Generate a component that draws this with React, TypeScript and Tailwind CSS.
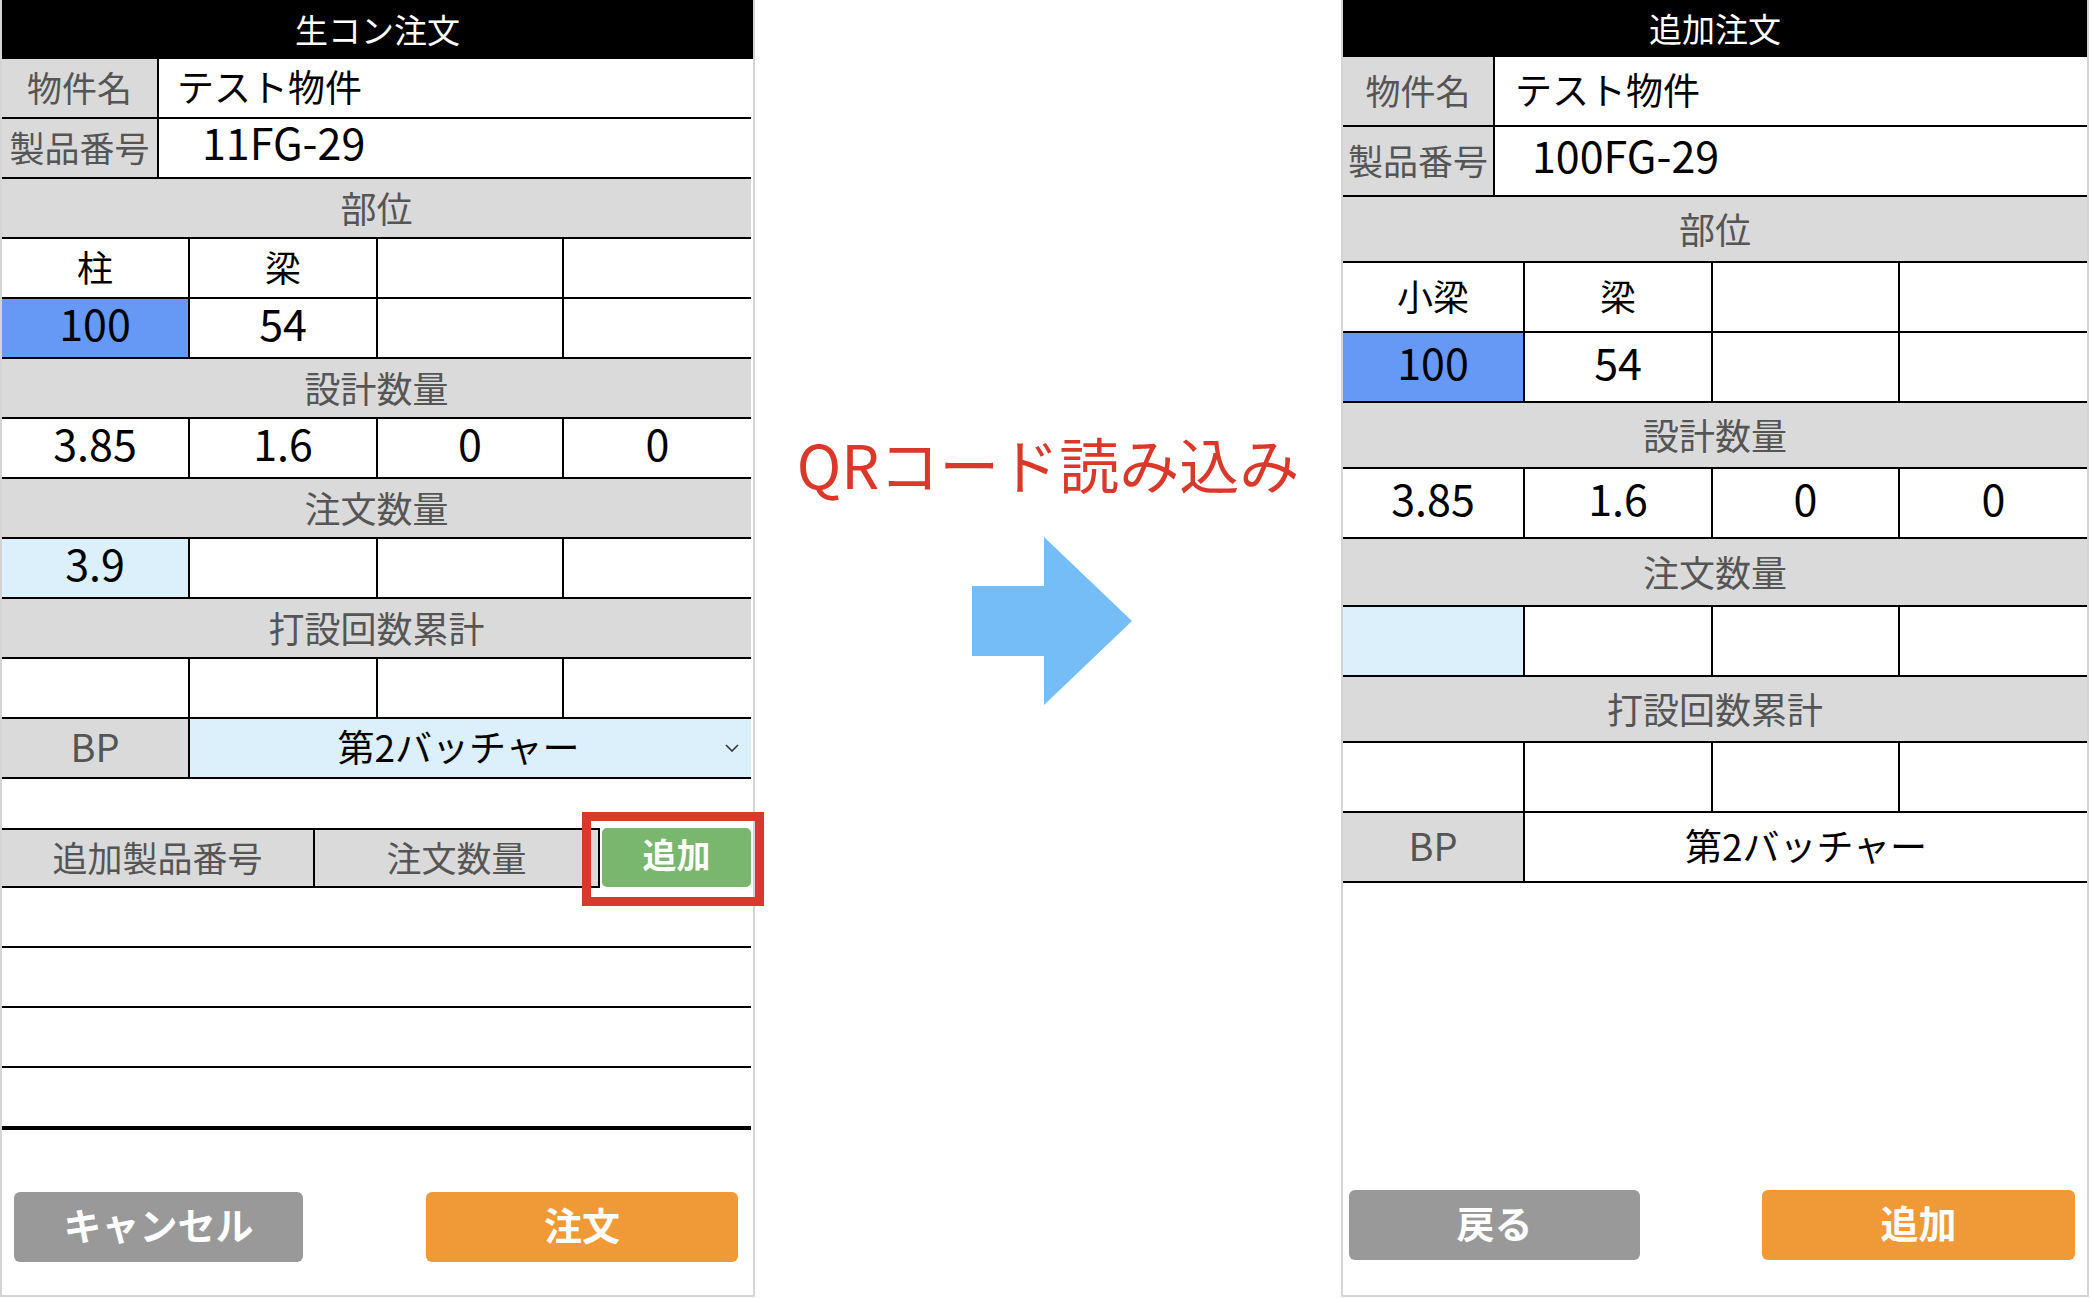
import React from 'react';

type Cell = { t?: string; bg?: string; cjk?: boolean };

function GridRow({ h, cols, cells }: { h: string; cols: string; cells: Cell[] }) {
  return (
    <div className={`grid ${cols} ${h} border-b-2 border-black`}>
      {cells.map((c, i) => (
        <div
          key={i}
          className={`flex items-center justify-center leading-none text-black ${c.cjk ? 'text-[36px] pb-[4px]' : 'text-[43px] pb-[12px]'} ${i > 0 ? 'border-l-2 border-black' : ''} ${c.bg ?? 'bg-white'}`}
        >
          {c.t ?? ''}
        </div>
      ))}
    </div>
  );
}

function SectionHeader({ h, text }: { h: string; text: string }) {
  return (
    <div className={`${h} flex items-center justify-center bg-[#dadada] text-[#555555] text-[36px] leading-none pb-[3px] border-b-2 border-black`}>
      {text}
    </div>
  );
}

function LabelRow({
  h,
  labelW,
  label,
  value,
  valueClass,
}: {
  h: string;
  labelW: string;
  label: string;
  value: string;
  valueClass: string;
}) {
  return (
    <div className={`flex ${h} border-b-2 border-black`}>
      <div className={`${labelW} shrink-0 flex items-center justify-center bg-[#dadada] text-[#555555] text-[35px] leading-none pb-[4px] border-r-2 border-black`}>
        {label}
      </div>
      <div className={`flex-1 flex items-center leading-none text-black ${valueClass}`}>{value}</div>
    </div>
  );
}

function Chevron() {
  return (
    <svg width="14" height="8" viewBox="0 0 14 8" className="shrink-0">
      <polyline points="1,1 7,7 13,1" fill="none" stroke="#333" strokeWidth="1.6" />
    </svg>
  );
}

function LeftPanel() {
  const cols = 'grid-cols-[186px_188px_186px_1fr]';
  const h = 'h-[60px]';
  return (
    <div className="w-[755px] h-[1297px] shrink-0 border-x-2 border-b-2 border-[#d4d4d4] flex flex-col bg-white">
      <div className="h-[59px] bg-black text-white text-[33px] leading-none flex items-center justify-center">生コン注文</div>
      <div className="mr-[2px] flex flex-col">
        <LabelRow h={h} labelW="w-[157px]" label="物件名" value="テスト物件" valueClass="pl-[18px] text-[37px] pb-[4px]" />
        <LabelRow h={h} labelW="w-[157px]" label="製品番号" value="11FG-29" valueClass="pl-[43px] text-[43px] pb-[13px]" />
        <SectionHeader h={h} text="部位" />
        <GridRow h={h} cols={cols} cells={[{ t: '柱', cjk: true }, { t: '梁', cjk: true }, {}, {}]} />
        <GridRow h={h} cols={cols} cells={[{ t: '100', bg: 'bg-[#6699f5]' }, { t: '54' }, {}, {}]} />
        <SectionHeader h={h} text="設計数量" />
        <GridRow h={h} cols={cols} cells={[{ t: '3.85' }, { t: '1.6' }, { t: '0' }, { t: '0' }]} />
        <SectionHeader h={h} text="注文数量" />
        <GridRow h={h} cols={cols} cells={[{ t: '3.9', bg: 'bg-[#dcf0fc]' }, {}, {}, {}]} />
        <SectionHeader h={h} text="打設回数累計" />
        <GridRow h={h} cols={cols} cells={[{}, {}, {}, {}]} />
        <div className={`grid ${cols} ${h} border-b-2 border-black`}>
          <div className="flex items-center justify-center bg-[#dadada] text-[#555555] text-[38px] leading-none pb-[4px]">BP</div>
          <div className="col-span-3 border-l-2 border-black bg-[#dcf0fc] flex items-center pl-[2px] pr-[12px]">
            <div className="flex-1 text-center text-black text-[37px] leading-none pb-[4px]">第2バッチャー</div>
            <Chevron />
          </div>
        </div>
        <div className="h-[49px]" />
        <div className="relative flex h-[60px]">
          <div className="w-[599px] flex border-y-2 border-r-2 border-black bg-[#dadada] text-[#555555] text-[35px] leading-none">
            <div className="w-[313px] border-r-2 border-black flex items-center justify-center pb-[4px]">追加製品番号</div>
            <div className="flex-1 flex items-center justify-center pb-[4px]">注文数量</div>
          </div>
          <div className="ml-[2px] w-[149px] h-[59px] rounded-[5px] bg-[#78b76d] text-white font-bold text-[34px] leading-none pb-[8px] flex items-center justify-center">
            追加
          </div>
          <div className="absolute left-[580px] top-[-16px] w-[182px] h-[94px] border-[9px] border-[#d9392a]" />
        </div>
        <div className="h-[60px] border-b-2 border-black" />
        <div className="h-[60px] border-b-2 border-black" />
        <div className="h-[60px] border-b-2 border-black" />
        <div className="h-[62px] border-b-4 border-black" />
      </div>
      <div className="mt-[62px] flex justify-between pl-[12px] pr-[15px]">
        <div className="w-[289px] h-[70px] rounded-[6px] bg-[#999999] text-white font-bold text-[38px] leading-none pb-[6px] flex items-center justify-center">
          キャンセル
        </div>
        <div className="w-[312px] h-[70px] rounded-[6px] bg-[#f09a37] text-white font-bold text-[38px] leading-none pb-[6px] flex items-center justify-center">
          注文
        </div>
      </div>
    </div>
  );
}

function RightPanel() {
  const cols = 'grid-cols-[180px_188px_187px_1fr]';
  const r = 'h-[70px]';
  const s = 'h-[66px]';
  return (
    <div className="w-[748px] mr-[1px] h-[1297px] shrink-0 border-x-2 border-b-2 border-[#d4d4d4] flex flex-col bg-white">
      <div className="h-[57px] bg-black text-white text-[33px] leading-none flex items-center justify-center">追加注文</div>
      <div className="flex flex-col">
        <LabelRow h={r} labelW="w-[152px]" label="物件名" value="テスト物件" valueClass="pl-[20px] text-[37px] pb-[4px]" />
        <LabelRow h={r} labelW="w-[152px]" label="製品番号" value="100FG-29" valueClass="pl-[37px] text-[43px] pb-[13px]" />
        <SectionHeader h={s} text="部位" />
        <GridRow h={r} cols={cols} cells={[{ t: '小梁', cjk: true }, { t: '梁', cjk: true }, {}, {}]} />
        <GridRow h={r} cols={cols} cells={[{ t: '100', bg: 'bg-[#6699f5]' }, { t: '54' }, {}, {}]} />
        <SectionHeader h={s} text="設計数量" />
        <GridRow h={r} cols={cols} cells={[{ t: '3.85' }, { t: '1.6' }, { t: '0' }, { t: '0' }]} />
        <SectionHeader h="h-[68px]" text="注文数量" />
        <GridRow h={r} cols={cols} cells={[{ bg: 'bg-[#dcf0fc]' }, {}, {}, {}]} />
        <SectionHeader h={s} text="打設回数累計" />
        <GridRow h={r} cols={cols} cells={[{}, {}, {}, {}]} />
        <div className={`grid ${cols} ${r} border-b-2 border-black`}>
          <div className="flex items-center justify-center bg-[#dadada] text-[#555555] text-[38px] leading-none pb-[4px]">BP</div>
          <div className="col-span-3 border-l-2 border-black bg-white flex items-center justify-center text-black text-[37px] leading-none pb-[4px]">
            第2バッチャー
          </div>
        </div>
      </div>
      <div className="mt-[307px] flex justify-between pl-[6px] pr-[12px]">
        <div className="w-[291px] h-[70px] rounded-[6px] bg-[#999999] text-white font-bold text-[38px] leading-none pb-[6px] flex items-center justify-center">
          戻る
        </div>
        <div className="w-[313px] h-[70px] rounded-[6px] bg-[#f09a37] text-white font-bold text-[38px] leading-none pb-[6px] flex items-center justify-center">
          追加
        </div>
      </div>
    </div>
  );
}

function Middle() {
  return (
    <div className="flex-1 flex flex-col items-center pt-[433px]">
      <div className="text-[#d9392a] text-[60px] leading-none whitespace-nowrap">QRコード読み込み</div>
      <svg width="160" height="168" viewBox="0 0 160 168" className="mt-[44px] ml-[8px]">
        <polygon points="0,49 72,49 72,0 160,84 72,168 72,119 0,119" fill="#74bdf7" />
      </svg>
    </div>
  );
}

export default function App() {
  return (
    <div className="w-[2090px] h-[1298px] bg-white flex font-['Noto_Sans_CJK_JP',sans-serif] overflow-hidden">
      <LeftPanel />
      <Middle />
      <RightPanel />
    </div>
  );
}
